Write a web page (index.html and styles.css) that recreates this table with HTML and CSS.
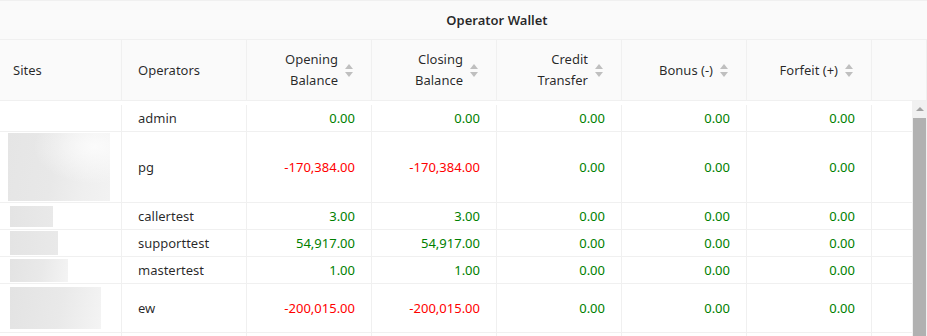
FILE: index.html
```html
<!DOCTYPE html>
<html lang="en">
<head>
<meta charset="utf-8">
<title>Operator Wallet</title>
<link rel="stylesheet" href="styles.css">
</head>
<body>
<div class="wallet">
  <div class="head">
    <div class="head-row title-row">
      <div class="hc"></div>
      <div class="hc title">Operator Wallet</div>
      <div class="hc"></div>
    </div>
    <div class="head-row cols">
      <div class="hc first">Sites</div>
      <div class="hc">Operators</div>
      <div class="hc num"><span class="label">Opening<br>Balance</span><svg class="sorter" viewBox="0 0 8 13" width="8" height="13"><polygon points="0,5 4,0 8,5"/><polygon points="0,8 8,8 4,13"/></svg></div>
      <div class="hc num"><span class="label">Closing<br>Balance</span><svg class="sorter" viewBox="0 0 8 13" width="8" height="13"><polygon points="0,5 4,0 8,5"/><polygon points="0,8 8,8 4,13"/></svg></div>
      <div class="hc num"><span class="label">Credit<br>Transfer</span><svg class="sorter" viewBox="0 0 8 13" width="8" height="13"><polygon points="0,5 4,0 8,5"/><polygon points="0,8 8,8 4,13"/></svg></div>
      <div class="hc num"><span class="label">Bonus (-)</span><svg class="sorter" viewBox="0 0 8 13" width="8" height="13"><polygon points="0,5 4,0 8,5"/><polygon points="0,8 8,8 4,13"/></svg></div>
      <div class="hc num"><span class="label">Forfeit (+)</span><svg class="sorter" viewBox="0 0 8 13" width="8" height="13"><polygon points="0,5 4,0 8,5"/><polygon points="0,8 8,8 4,13"/></svg></div>
      <div class="hc last"></div>
    </div>
  </div>
  <div class="body">
    <div class="rows">
      <div class="row">
        <div class="c site"></div>
        <div class="c">admin</div>
        <div class="c num pos">0.00</div>
        <div class="c num pos">0.00</div>
        <div class="c num pos">0.00</div>
        <div class="c num pos">0.00</div>
        <div class="c num pos">0.00</div>
        <div class="c end"></div>
      </div>
      <div class="row">
        <div class="c site"><div class="logo logo-a" style="width:102px;height:68px"></div></div>
        <div class="c">pg</div>
        <div class="c num neg">-170,384.00</div>
        <div class="c num neg">-170,384.00</div>
        <div class="c num pos">0.00</div>
        <div class="c num pos">0.00</div>
        <div class="c num pos">0.00</div>
        <div class="c end"></div>
      </div>
      <div class="row">
        <div class="c site"><div class="logo logo-b" style="width:43px;height:21px"></div></div>
        <div class="c">callertest</div>
        <div class="c num pos">3.00</div>
        <div class="c num pos">3.00</div>
        <div class="c num pos">0.00</div>
        <div class="c num pos">0.00</div>
        <div class="c num pos">0.00</div>
        <div class="c end"></div>
      </div>
      <div class="row">
        <div class="c site"><div class="logo logo-b" style="width:48px;height:24px"></div></div>
        <div class="c">supporttest</div>
        <div class="c num pos">54,917.00</div>
        <div class="c num pos">54,917.00</div>
        <div class="c num pos">0.00</div>
        <div class="c num pos">0.00</div>
        <div class="c num pos">0.00</div>
        <div class="c end"></div>
      </div>
      <div class="row">
        <div class="c site"><div class="logo logo-c" style="width:58px;height:23px"></div></div>
        <div class="c">mastertest</div>
        <div class="c num pos">1.00</div>
        <div class="c num pos">1.00</div>
        <div class="c num pos">0.00</div>
        <div class="c num pos">0.00</div>
        <div class="c num pos">0.00</div>
        <div class="c end"></div>
      </div>
      <div class="row">
        <div class="c site"><div class="logo logo-c roomy" style="width:91px;height:42px"></div></div>
        <div class="c">ew</div>
        <div class="c num neg">-200,015.00</div>
        <div class="c num neg">-200,015.00</div>
        <div class="c num pos">0.00</div>
        <div class="c num pos">0.00</div>
        <div class="c num pos">0.00</div>
        <div class="c end"></div>
      </div>
      <div class="row">
        <div class="c site"></div>
        <div class="c"></div>
        <div class="c num"></div>
        <div class="c num"></div>
        <div class="c num"></div>
        <div class="c num"></div>
        <div class="c num"></div>
        <div class="c end"></div>
      </div>
    </div>
    <div class="scrollbar">
      <div class="arrow"></div>
      <div class="thumb"></div>
    </div>
  </div>
</div>
</body>
</html>
```

FILE: styles.css
```css
* { box-sizing: border-box; }

html, body {
  margin: 0;
  padding: 0;
  background: #ffffff;
}

body {
  font-family: "Noto Sans", "Open Sans", sans-serif;
  font-size: 13px;
  color: rgba(0, 0, 0, 0.85);
  width: 927px;
  height: 336px;
  overflow: hidden;
}

.wallet {
  width: 927px;
}

.head {
  background: #fafafa;
  border-top: 1px solid #f0f0f0;
  font-weight: 400;
}

.head-row {
  display: grid;
  border-bottom: 1px solid #f0f0f0;
}

.title-row {
  grid-template-columns: 122px 750px 55px;
  height: 39px;
}

.title-row .hc {
  display: flex;
  align-items: center;
  justify-content: center;
}

.title {
  font-weight: 600;
}

.cols {
  grid-template-columns: 122px repeat(6, 125px) 55px;
  height: 61px;
}

.cols .hc {
  display: flex;
  align-items: center;
  padding: 0 16px;
  border-right: 1px solid #f0f0f0;
  line-height: 21px;
}

.cols .hc.first {
  padding-left: 13px;
}

.cols .hc.num {
  justify-content: flex-end;
  text-align: right;
  padding-right: 18px;
}

.label {
  display: block;
}

.sorter {
  flex: none;
  margin-left: 7px;
  fill: #bfbfbf;
}

.body {
  display: flex;
  height: 235px;
  overflow: hidden;
}

.rows {
  width: 912px;
  padding-top: 4px;
}

.row {
  display: grid;
  grid-template-columns: 122px repeat(6, 125px) 40px;
  border-bottom: 1px solid #f0f0f0;
  min-height: 27px;
}

.c {
  display: flex;
  align-items: center;
  padding: 0 16px;
  border-right: 1px solid #f0f0f0;
  min-height: 26px;
}

.c.site {
  padding: 1px 0 1px 10px;
}

.c.end {
  border-right: none;
}

.c.num {
  justify-content: flex-end;
}

.pos { color: #008000; }
.neg { color: #ff0000; }

.logo {
  flex: none;
}

.logo.roomy {
  margin: 2px 0;
}

.logo-a {
  margin-left: -2px;
  background:
    radial-gradient(ellipse 60% 55% at 85% 20%, #fbfbfb 0%, rgba(251,251,251,0) 100%),
    linear-gradient(100deg, #e5e5e5 0%, #e8e8e8 45%, #efefef 75%, #f2f2f2 100%);
}

.logo-b {
  background: linear-gradient(90deg, #e4e4e4, #e9e9e9);
}

.logo-c {
  background: linear-gradient(100deg, #e3e3e3 0%, #e9e9e9 55%, #f4f4f4 100%);
}

.scrollbar {
  width: 15px;
  flex: none;
  background: #f1f1f1;
  display: flex;
  flex-direction: column;
  align-items: center;
}

.arrow {
  margin-top: 6px;
  width: 0;
  height: 0;
  border-left: 4px solid transparent;
  border-right: 4px solid transparent;
  border-bottom: 4px solid #a3a3a3;
}

.thumb {
  margin-top: 7px;
  width: 13px;
  flex: 1;
  background: #b1b1b1;
}
```
